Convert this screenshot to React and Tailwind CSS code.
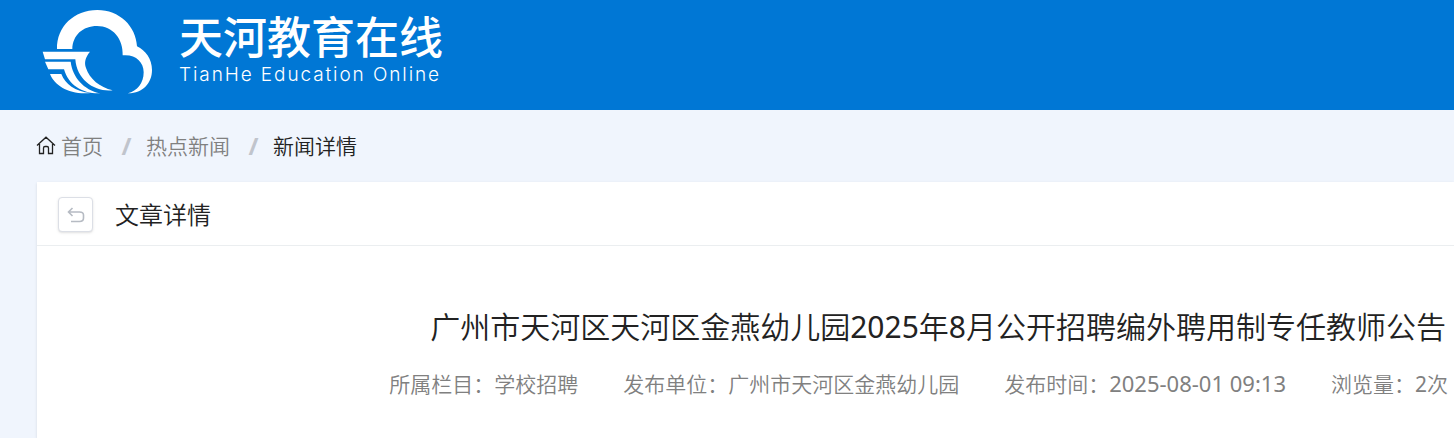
import React from 'react';

const crumbs = [
  { label: '首页', href: '#home' },
  { label: '热点新闻', href: '#news' },
];

const meta = [
  { label: '所属栏目', value: '学校招聘' },
  { label: '发布单位', value: '广州市天河区金燕幼儿园' },
  { label: '发布时间', value: <span className="text-[22px] font-normal">2025-08-01 09:13</span> },
  { label: '浏览量', value: <><Num>2</Num>次</> },
];

function Num({ children }) {
  return <span className="font-normal">{children}</span>;
}

function CloudLogo() {
  return (
    <svg viewBox="36 27 333 255" className="h-[85px] w-[111px] shrink-0" fill="#fff" aria-hidden="true">
      <path d="M81 147C80 80 132 30 202 30C268 30 318 78 321 139C347 151 366 178 366 210C366 249 338 281 293 280C322 273 341 250 341 217C341 185 316 162 278 166C280 116 248 78 201 78C158 78 128 106 127 147Z" />
      <path d="M38 155H180C166 172 162 187 168 204C179 237 209 262 248 271C195 277 140 240 136 178H45Z" />
      <path d="M45 185H122C128 232 160 269 211 280C158 282 116 256 102 208H55Z" />
      <path d="M60 222H94C106 253 134 274 182 279C119 285 74 258 60 222Z" />
    </svg>
  );
}

function Header() {
  return (
    <header className="flex h-[110px] items-start bg-[#0077d5] pl-[42px] text-white">
      <a href="#home" className="flex gap-[26px] pt-[9px]">
        <CloudLogo />
        <span className="flex flex-col">
          <span className="text-[44px] leading-[56px] font-medium">天河教育在线</span>
          <span className="font-['Inter'] text-[19px] leading-5 font-[350] tracking-widest">TianHe Education Online</span>
        </span>
      </a>
    </header>
  );
}

function Breadcrumb() {
  return (
    <nav aria-label="breadcrumb" className="flex items-center px-9 pt-5 text-[21px] leading-8 font-[350] text-[#808080]">
      <svg viewBox="0 0 20 20" className="mr-[5px] size-5 text-[#222]" fill="none" stroke="currentColor" strokeWidth="1.3" aria-hidden="true">
        <path d="M1 9.5L10 1.2L19 9.5M3.500 8V17.500H7.500V12Q7.500 10.500 9 10.500H11Q12.500 10.500 12.500 12V17.500H16.500V8" />
      </svg>
      {crumbs.map((c) => (
        <React.Fragment key={c.label}>
          <a href={c.href}>{c.label}</a>
          <span className="w-[43px] pl-1 text-center text-[24px] font-bold text-[#c0c4cc]">/</span>
        </React.Fragment>
      ))}
      <span className="text-[#222]">新闻详情</span>
    </nav>
  );
}

export default function App() {
  return (
    <div className="min-h-screen bg-[#f0f5fd] font-['Noto_Sans','Noto_Sans_CJK_SC',sans-serif]">
      <Header />
      <Breadcrumb />
      <main className="mt-5 ml-[37px] min-h-64 bg-white shadow-sm">
        <div className="flex h-16 items-center gap-[22px] border-b border-[#ebeef0] pt-[2px] pl-[21px]">
          <button type="button" aria-label="返回" className="flex size-[35px] items-center justify-center rounded border border-[#dcdfe6] bg-white shadow-sm">
            <svg viewBox="0 0 18 18" className="size-[18px]" fill="none" stroke="#b6bbc3" strokeWidth="1.6" aria-hidden="true">
              <path d="M5.500 2L1.500 6L5.500 10M1.500 6H12.500Q16.500 6 16.500 9V12Q16.500 15.500 12.500 15.500H4" />
            </svg>
          </button>
          <h2 className="text-[24px] leading-8 font-[350] text-[#222]">文章详情</h2>
        </div>
        <article className="pt-[61px]">
          <h1 className="pr-2 text-right text-[30px] leading-10 font-[350] whitespace-nowrap text-[#222]">
            广州市天河区天河区金燕幼儿园<Num>2025</Num>年<Num>8</Num>月公开招聘编外聘用制专任教师公告
          </h1>
          <div className="mt-5 flex items-baseline justify-end gap-[45px] pr-[6px] text-[21px] leading-8 font-[350] whitespace-nowrap text-[#808080]">
            {meta.map((m) => (
              <span key={m.label}>
                {m.label}：{m.value}
              </span>
            ))}
          </div>
        </article>
      </main>
    </div>
  );
}
